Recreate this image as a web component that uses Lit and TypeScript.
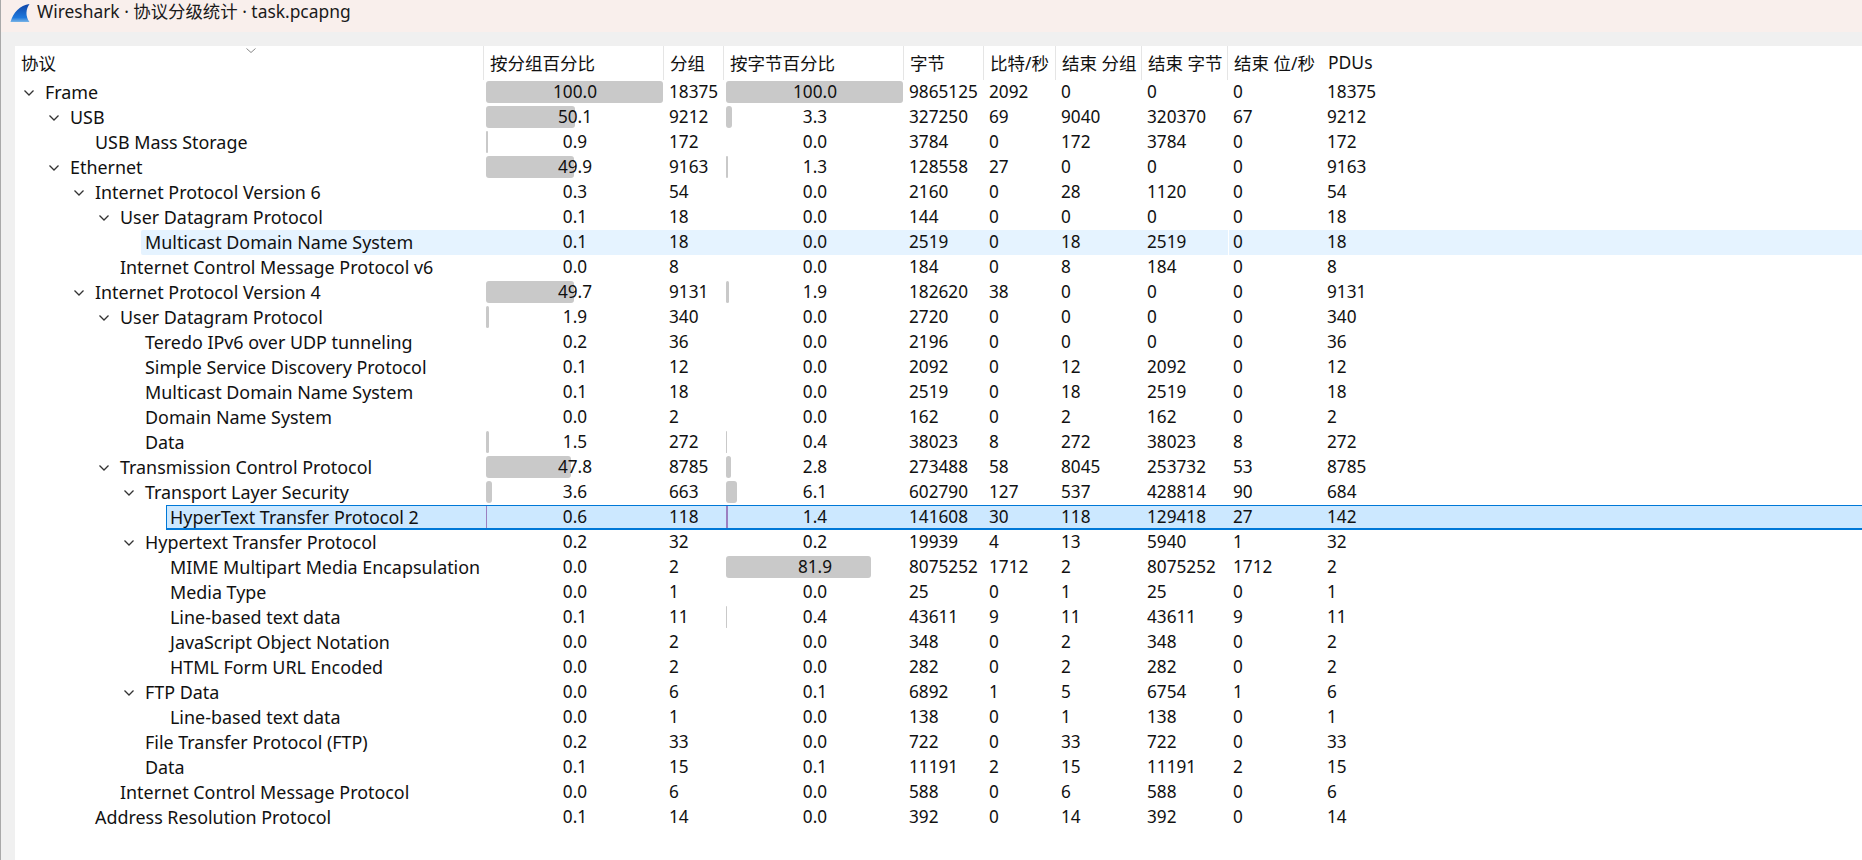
import { LitElement, html, css, svg } from 'lit';
import { customElement } from 'lit/decorators.js';

// depth, has children, name, pkt %, packets, byte %, bytes, bits/s, end pkts, end bytes, end bits/s, PDUs
type Row = [number, boolean, string, number, number, number, number, number, number, number, number, number];

const rows: Row[] = [
  [0, true, 'Frame', 100.0, 18375, 100.0, 9865125, 2092, 0, 0, 0, 18375],
  [1, true, 'USB', 50.1, 9212, 3.3, 327250, 69, 9040, 320370, 67, 9212],
  [2, false, 'USB Mass Storage', 0.9, 172, 0.0, 3784, 0, 172, 3784, 0, 172],
  [1, true, 'Ethernet', 49.9, 9163, 1.3, 128558, 27, 0, 0, 0, 9163],
  [2, true, 'Internet Protocol Version 6', 0.3, 54, 0.0, 2160, 0, 28, 1120, 0, 54],
  [3, true, 'User Datagram Protocol', 0.1, 18, 0.0, 144, 0, 0, 0, 0, 18],
  [4, false, 'Multicast Domain Name System', 0.1, 18, 0.0, 2519, 0, 18, 2519, 0, 18],
  [3, false, 'Internet Control Message Protocol v6', 0.0, 8, 0.0, 184, 0, 8, 184, 0, 8],
  [2, true, 'Internet Protocol Version 4', 49.7, 9131, 1.9, 182620, 38, 0, 0, 0, 9131],
  [3, true, 'User Datagram Protocol', 1.9, 340, 0.0, 2720, 0, 0, 0, 0, 340],
  [4, false, 'Teredo IPv6 over UDP tunneling', 0.2, 36, 0.0, 2196, 0, 0, 0, 0, 36],
  [4, false, 'Simple Service Discovery Protocol', 0.1, 12, 0.0, 2092, 0, 12, 2092, 0, 12],
  [4, false, 'Multicast Domain Name System', 0.1, 18, 0.0, 2519, 0, 18, 2519, 0, 18],
  [4, false, 'Domain Name System', 0.0, 2, 0.0, 162, 0, 2, 162, 0, 2],
  [4, false, 'Data', 1.5, 272, 0.4, 38023, 8, 272, 38023, 8, 272],
  [3, true, 'Transmission Control Protocol', 47.8, 8785, 2.8, 273488, 58, 8045, 253732, 53, 8785],
  [4, true, 'Transport Layer Security', 3.6, 663, 6.1, 602790, 127, 537, 428814, 90, 684],
  [5, false, 'HyperText Transfer Protocol 2', 0.6, 118, 1.4, 141608, 30, 118, 129418, 27, 142],
  [4, true, 'Hypertext Transfer Protocol', 0.2, 32, 0.2, 19939, 4, 13, 5940, 1, 32],
  [5, false, 'MIME Multipart Media Encapsulation', 0.0, 2, 81.9, 8075252, 1712, 2, 8075252, 1712, 2],
  [5, false, 'Media Type', 0.0, 1, 0.0, 25, 0, 1, 25, 0, 1],
  [5, false, 'Line-based text data', 0.1, 11, 0.4, 43611, 9, 11, 43611, 9, 11],
  [5, false, 'JavaScript Object Notation', 0.0, 2, 0.0, 348, 0, 2, 348, 0, 2],
  [5, false, 'HTML Form URL Encoded', 0.0, 2, 0.0, 282, 0, 2, 282, 0, 2],
  [4, true, 'FTP Data', 0.0, 6, 0.1, 6892, 1, 5, 6754, 1, 6],
  [5, false, 'Line-based text data', 0.0, 1, 0.0, 138, 0, 1, 138, 0, 1],
  [4, false, 'File Transfer Protocol (FTP)', 0.2, 33, 0.0, 722, 0, 33, 722, 0, 33],
  [4, false, 'Data', 0.1, 15, 0.1, 11191, 2, 15, 11191, 2, 15],
  [3, false, 'Internet Control Message Protocol', 0.0, 6, 0.0, 588, 0, 6, 588, 0, 6],
  [2, false, 'Address Resolution Protocol', 0.1, 14, 0.0, 392, 0, 14, 392, 0, 14],
];

const headers = ['按分组百分比', '分组', '按字节百分比', '字节', '比特/秒', '结束 分组', '结束 字节', '结束 位/秒', 'PDUs'];

const HOVER_ROW = 6;
const SELECTED_ROW = 17;

const chevron = svg`<svg class="chev" width="10" height="6" viewBox="0 0 10 6"><path d="M0.5 0.5 L5 5 L9.5 0.5" fill="none" stroke="#333" stroke-width="1.3"/></svg>`;

@customElement('app-root')
export class AppRoot extends LitElement {
  static styles = css`
    :host {
      display: block;
      position: relative;
      width: 1862px;
      height: 860px;
      overflow: hidden;
      background: #f0f0f0;
      font-family: 'Noto Sans', 'Noto Sans CJK SC', sans-serif;
      font-size: 17.2px;
      color: #111;
    }
    .edge {
      position: absolute;
      left: 0;
      top: 0;
      bottom: 0;
      width: 1px;
      background: #a9a9a9;
    }
    .title {
      height: 32px;
      background: #f9efec;
      display: flex;
      align-items: center;
      gap: 7px;
      padding: 0 0 6px 10px;
      box-sizing: border-box;
      font-size: 17.4px;
      color: #1a1a1a;
    }
    .title span { margin-bottom: 6px; }
    .panel {
      margin: 14px 0 0 15px;
      height: 814px;
      background: #fff;
      position: relative;
    }
    .sort {
      position: absolute;
      left: 231px;
      top: 2px;
    }
    .grid {
      display: grid;
      grid-template-columns: 469px 180px 60px 180px 80px 72px 86px 86px 94px 1fr;
    }
    .head {
      height: 34px;
      display: flex;
      align-items: center;
      padding: 0 0 2px 6px;
      box-sizing: border-box;
      border-right: 1px solid #e5e5e5;
      white-space: nowrap;
      font-size: 17.5px;
    }
    .head.plain { border-right: none; }
    .row {
      display: contents;
    }
    .cell {
      height: 25px;
      line-height: 24px;
      padding-left: 5px;
      box-sizing: border-box;
      white-space: nowrap;
      position: relative;
    }
    .row.hover .cell { background: #e5f3ff; }
    .row.hover .cell:nth-child(9) {
      border-left: 1px solid #fff;
      padding-left: 4px;
    }
    .row.sel .cell {
      background: #cce8ff;
      border-top: 1px solid #0078d7;
      border-bottom: 2px solid #0078d7;
      line-height: 22px;
    }
    .row .cell.name,
    .row.hover .cell.name,
    .row.sel .cell.name {
      background: none;
      border: none;
      padding: 0;
    }
    .fill {
      position: absolute;
      top: 0;
      bottom: 0;
      right: 0;
      box-sizing: border-box;
    }
    .row.hover .fill {
      background: #e5f3ff;
      border-radius: 2px 0 0 2px;
    }
    .row.sel .fill {
      background: #cce8ff;
      border: 1px solid #0078d7;
      border-width: 1px 0 2px 1px;
    }
    .label {
      position: absolute;
      top: 0;
      bottom: 1px;
      display: flex;
      align-items: center;
      font-size: 17.9px;
    }
    .twisty {
      position: absolute;
      top: 10px;
      line-height: 0;
    }
    .pct {
      text-align: center;
    }
    .cell.pct { padding: 0; }
    .bar {
      position: absolute;
      left: 2px;
      top: 1px;
      height: 22px;
      background: #c9c9c9;
      border-radius: 3px;
    }
    .row.sel .bar {
      top: 0;
      background: #9b7fc0;
      border-radius: 0;
    }
    .pct span {
      position: relative;
      padding-left: 2px;
    }
  `;

  renderBar(pct: number) {
    if (pct < 0.4) return '';
    const w = Math.max(1, Math.round(pct * 1.77));
    return html`<div class="bar" style="width:${w}px"></div>`;
  }

  renderRow(r: Row, i: number) {
    const [depth, kids, name, pp, pk, bp, by, bits, ep, eb, ebits, pdus] = r;
    const cls = i === HOVER_ROW ? 'row hover' : i === SELECTED_ROW ? 'row sel' : 'row';
    const textX = 30 + 25 * depth;
    return html`<div class=${cls}>
      <div class="cell name">
        <div class="fill" style="left:${textX - 4}px"></div>
        ${kids ? html`<span class="twisty" style="left:${textX - 21}px">${chevron}</span>` : ''}
        <div class="label" style="left:${textX}px">${name}</div>
      </div>
      <div class="cell pct">${this.renderBar(pp)}<span>${pp.toFixed(1)}</span></div>
      <div class="cell">${pk}</div>
      <div class="cell pct">${this.renderBar(bp)}<span>${bp.toFixed(1)}</span></div>
      <div class="cell">${by}</div>
      <div class="cell">${bits}</div>
      <div class="cell">${ep}</div>
      <div class="cell">${eb}</div>
      <div class="cell">${ebits}</div>
      <div class="cell">${pdus}</div>
    </div>`;
  }

  render() {
    return html`
      <div class="title">
        <svg width="20" height="20" viewBox="0 0 20 20">
          <defs>
            <linearGradient id="fin" x1="0" y1="0" x2="0" y2="1">
              <stop offset="0" stop-color="#0f45a8" />
              <stop offset="0.75" stop-color="#1f78dc" />
              <stop offset="1" stop-color="#79b4e6" />
            </linearGradient>
          </defs>
          <path d="M0.5 19 C3 10 10 2 19.5 1 C16 6 15 13 19.5 19 Z" fill="url(#fin)" />
        </svg>
        <span>Wireshark · 协议分级统计 · task.pcapng</span>
      </div>
      <div class="panel">
        <svg class="sort" width="10" height="6" viewBox="0 0 10 6"><path d="M0.5 0.5 L5 4.5 L9.5 0.5" fill="none" stroke="#888" stroke-width="1"/></svg>
        <div class="grid">
          <div class="head">协议</div>
          ${headers.map((h, i) => html`<div class="head ${i >= 7 ? 'plain' : ''}">${h}</div>`)}
          ${rows.map((r, i) => this.renderRow(r, i))}
        </div>
      </div>
      <div class="edge"></div>
    `;
  }
}
